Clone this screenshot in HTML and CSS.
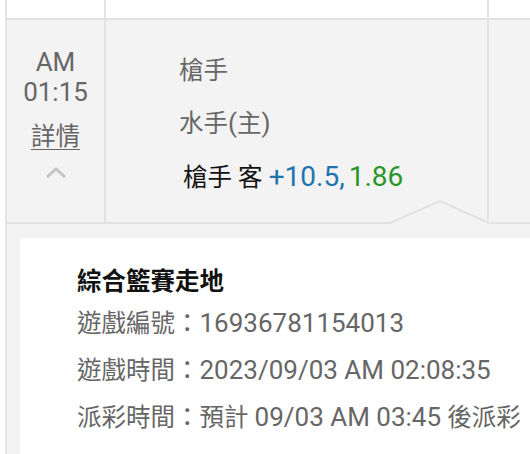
FILE: index.html
```html
<!DOCTYPE html>
<html lang="zh-Hant">
<head>
    <meta charset="UTF-8">
    <meta name="viewport" content="width=device-width, initial-scale=1.0">
    <title>注單詳情</title>
    <link rel="stylesheet" href="styles.css">
</head>
<body>

<div class="bet-table">
    <div class="row row-top">
        <div class="cell"></div>
        <div class="cell"></div>
        <div class="cell cell-last"></div>
    </div>

    <div class="row row-main">
        <div class="cell cell-time">
            <div class="time">AM<br>01:15</div>
            <a class="detail-link" href="#">詳情</a>
            <svg class="chevron" width="22" height="14" viewBox="0 0 22 14">
                <polyline points="2,12 11,4 20,12" fill="none" stroke="#c4c4c4" stroke-width="3"/>
            </svg>
        </div>
        <div class="cell cell-bet">
            <div class="bet-line">槍手</div>
            <div class="bet-line">水手<span class="num">(</span>主<span class="num">)</span></div>
            <div class="bet-line bet-pick">槍手 客 <span class="handicap">+10.5,</span><span class="odds">1.86</span></div>
        </div>
        <div class="cell cell-last"></div>

        <!-- arrow pointing at the open detail -->
        <svg class="arrow" width="100" height="25" viewBox="0 0 100 25">
            <rect x="0" y="20" width="100" height="5" fill="#f3f3f3"/>
            <polyline points="0,23 50,1 99,23" fill="none" stroke="#e2e2e2" stroke-width="2"/>
        </svg>
    </div>

    <div class="detail">
        <div class="detail-panel">
            <div class="detail-title">綜合籃賽走地</div>
            <div class="detail-line">遊戲編號：<span class="num">16936781154013</span></div>
            <div class="detail-line">遊戲時間：<span class="num">2023/09/03 AM 02:08:35</span></div>
            <div class="detail-line">派彩時間：預計 <span class="num">09/03 AM 03:45</span> 後派彩</div>
        </div>
    </div>
</div>

</body>
</html>
```

FILE: styles.css
```css
body {
    margin: 0;
    background-color: #fff;
    font-family: Roboto, "Noto Sans CJK TC", sans-serif;
    font-size: 24.5px;
    color: #666;
    overflow: hidden;
}
.num {
    font-size: 26px;
}
.bet-table {
    margin-left: 5px;
    border-left: 2px solid #e4e4e4;
}
.row {
    display: grid;
    grid-template-columns: 99px 383px 1fr;
}
.cell {
    border-right: 2px solid #e2e2e2;
}
.cell-last {
    border-right: none;
}
.row-top {
    height: 18px;
    border-bottom: 2px solid #e2e2e2;
}
.row-main {
    position: relative;
    height: 202px;
    background-color: #f3f3f3;
    border-bottom: 2px solid #e2e2e2;
}
.cell-time {
    padding-top: 27px;
    text-align: center;
}
.time {
    font-size: 26px;
    line-height: 30px;
}
.detail-link {
    display: inline-block;
    margin-top: 14px;
    line-height: 32px;
    color: #666;
    text-decoration: underline;
    text-underline-offset: 4px;
    text-decoration-thickness: 1px;
}
.chevron {
    display: block;
    margin: 12px auto 0;
}
.cell-bet {
    padding-top: 24px;
    padding-left: 73px;
}
.bet-line {
    line-height: 53px;
    white-space: nowrap;
}
.bet-pick {
    padding-left: 4px;
    color: #111;
}
.handicap {
    font-size: 28px;
    color: #1f74ad;
}
.odds {
    margin-left: 4px;
    font-size: 28px;
    color: #2a962a;
}
.arrow {
    position: absolute;
    left: 383px;
    bottom: -3px;
}
.detail {
    background-color: #f3f3f3;
    padding: 14px 0 0 13px;
}
.detail-panel {
    background-color: #fff;
    padding: 25px 0 0 57px;
    height: 191px;
    white-space: nowrap;
}
.detail-title {
    line-height: 37px;
    font-weight: bold;
    color: #111;
}
.detail-line {
    line-height: 47px;
}
```
